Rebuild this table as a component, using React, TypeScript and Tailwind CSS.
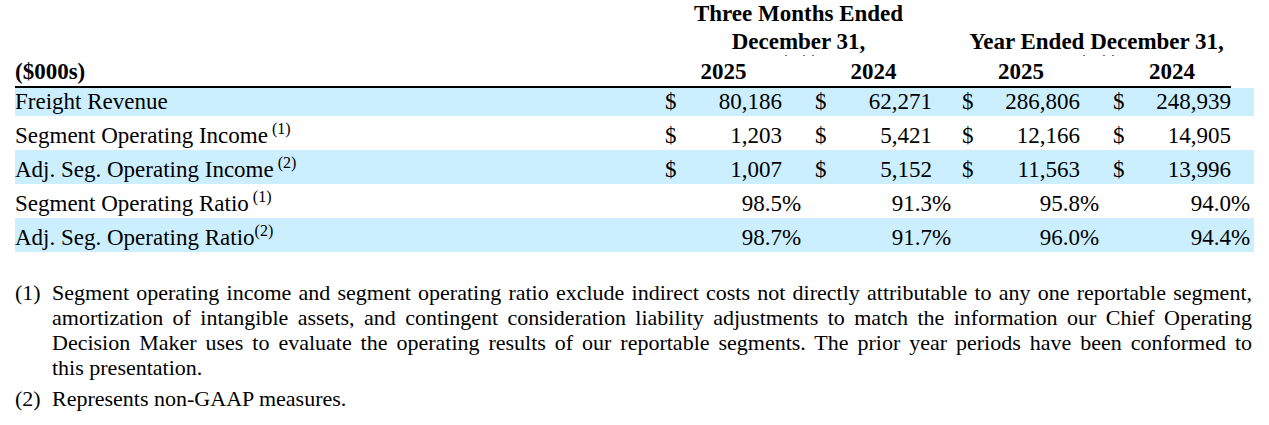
import React from "react";

type Row = {
  label: string;
  sup?: string;
  supSpace?: boolean;
  dollar?: boolean;
  pct?: boolean;
  vals: string[];
  blue?: boolean;
};

const rows: Row[] = [
  {
    label: "Freight Revenue",
    dollar: true,
    vals: ["80,186", "62,271", "286,806", "248,939"],
    blue: true,
  },
  {
    label: "Segment Operating Income",
    sup: "(1)",
    supSpace: true,
    dollar: true,
    vals: ["1,203", "5,421", "12,166", "14,905"],
  },
  {
    label: "Adj. Seg. Operating Income",
    sup: "(2)",
    supSpace: true,
    dollar: true,
    vals: ["1,007", "5,152", "11,563", "13,996"],
    blue: true,
  },
  {
    label: "Segment Operating Ratio",
    sup: "(1)",
    supSpace: true,
    pct: true,
    vals: ["98.5", "91.3", "95.8", "94.0"],
  },
  {
    label: "Adj. Seg. Operating Ratio",
    sup: "(2)",
    pct: true,
    vals: ["98.7", "91.7", "96.0", "94.4"],
    blue: true,
  },
];

// label | ($ num %) x4
const cols =
  "grid grid-cols-[650px_20px_97px_33px_20px_97px_30px_20px_98px_33px_20px_98px_23px]";

function Dot() {
  return <span className="block w-[2px] h-[1px] bg-gray-500" />;
}

export default function App() {
  return (
    <div className="min-h-[425px] bg-white text-black px-[15px] font-['Liberation_Serif',serif] text-[23px]">
      {/* header */}
      <div className={`${cols} font-bold leading-[24px]`}>
        <div className="col-start-2 col-span-5 h-[28px] pt-[2px] text-center whitespace-nowrap">
          Three Months Ended
        </div>
        <div className="col-start-1 col-span-13" />
        <div className="col-start-2 col-span-5 h-[27px] pt-[2px] text-center whitespace-nowrap">
          December 31,
        </div>
        <div className="col-start-8 col-span-5 h-[27px] pt-[2px] text-center whitespace-nowrap">
          Year Ended December 31,
        </div>
      </div>

      <div className="flex h-[3px] items-start">
        <div className="ml-[770px]"><Dot /></div>
        <div className="ml-[16px]"><Dot /></div>
        <div className="ml-[7px]"><Dot /></div>
        <div className="ml-[269px]"><Dot /></div>
        <div className="ml-[18px]"><Dot /></div>
        <div className="ml-[7px]"><Dot /></div>
      </div>

      <div className={`${cols} font-bold leading-[24px]`}>
        <div className="col-start-1 h-[28px] pt-[2px]">($000s)</div>
        <div className="col-start-2 col-span-2 h-[28px] pt-[2px] text-center">2025</div>
        <div className="col-start-5 col-span-2 h-[28px] pt-[2px] text-center">2024</div>
        <div className="col-start-8 col-span-2 h-[28px] pt-[2px] text-center">2025</div>
        <div className="col-start-11 col-span-2 h-[28px] pt-[2px] text-center">2024</div>
        <div className="col-start-1 col-span-12 h-[2px] bg-black" />
      </div>

      {/* body */}
      {rows.map((r, i) => (
        <div
          key={r.label}
          className={`${cols} leading-[24px] ${r.blue ? "bg-[#ccefff]" : ""} ${
            i === 0 ? "h-[28px] pt-[2px]" : "h-[34px] pt-[8px]"
          }`}
        >
          <div className="whitespace-nowrap">
            {r.label}
            {r.sup && (
              <span className="relative top-[-9px] text-[16px]">
                {r.supSpace ? "\u00a0" : ""}
                {r.sup}
              </span>
            )}
          </div>
          {r.vals.map((v, j) => (
            <React.Fragment key={j}>
              <div>{r.dollar ? "$" : ""}</div>
              <div className="text-right">{v}</div>
              <div>{r.pct ? "%" : ""}</div>
            </React.Fragment>
          ))}
        </div>
      ))}

      {/* footnotes */}
      <div className="mt-[28px] w-[1237px] text-[22px] leading-[25px]">
        <div className="grid grid-cols-[37px_1fr]">
          <div>(1)</div>
          <p className="text-justify">
            Segment operating income and segment operating ratio exclude indirect costs
            not directly attributable to any one reportable segment, amortization of
            intangible assets, and contingent consideration liability adjustments to match
            the information our Chief Operating Decision Maker uses to evaluate the
            operating results of our reportable segments. The prior year periods have been
            conformed to <span className="whitespace-nowrap">this presentation.</span>
          </p>
        </div>
        <div className="grid grid-cols-[37px_1fr] mt-[6px]">
          <div>(2)</div>
          <p>Represents non-GAAP measures.</p>
        </div>
      </div>
    </div>
  );
}
